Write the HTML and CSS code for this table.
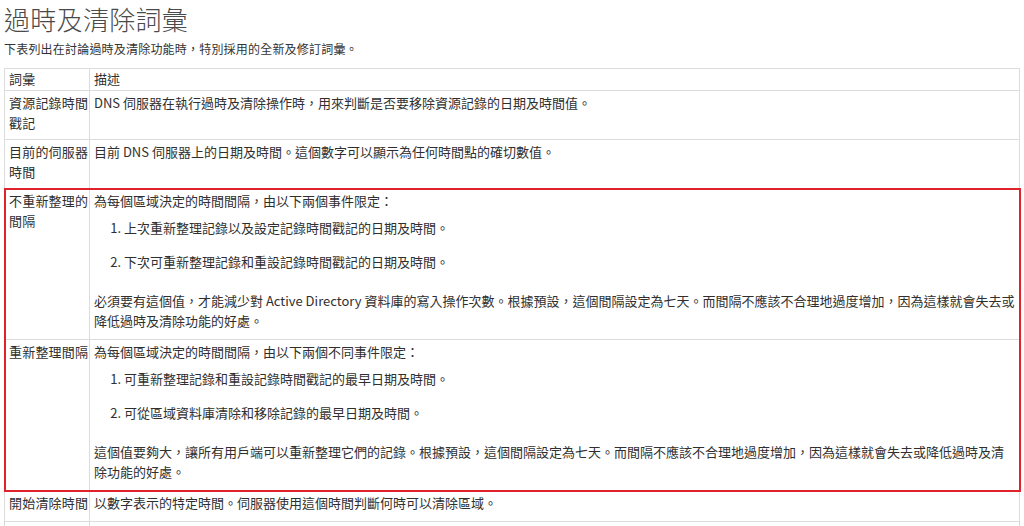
FILE: index.html
```html
<!DOCTYPE html>
<html lang="zh-Hant">
<head>
<meta charset="utf-8">
<title>過時及清除詞彙</title>
<link rel="stylesheet" href="styles.css">
</head>
<body>
<main class="page">
  <h1 class="title">過時及清除詞彙</h1>
  <p class="intro">下表列出在討論過時及清除功能時，特別採用的全新及修訂詞彙。</p>
  <table class="terms">
    <thead>
      <tr>
        <th class="term">詞彙</th>
        <th class="desc">描述</th>
      </tr>
    </thead>
    <tbody>
      <tr>
        <td class="term">資源記錄時間戳記</td>
        <td class="desc"><p>DNS 伺服器在執行過時及清除操作時，用來判斷是否要移除資源記錄的日期及時間值。</p></td>
      </tr>
      <tr>
        <td class="term">目前的伺服器時間</td>
        <td class="desc"><p>目前 DNS 伺服器上的日期及時間。這個數字可以顯示為任何時間點的確切數值。</p></td>
      </tr>
    </tbody>
    <tbody class="highlight">
      <tr>
        <td class="term">不重新整理的間隔</td>
        <td class="desc">
          <p>為每個區域決定的時間間隔，由以下兩個事件限定：</p>
          <ol class="steps">
            <li>上次重新整理記錄以及設定記錄時間戳記的日期及時間。</li>
            <li>下次可重新整理記錄和重設記錄時間戳記的日期及時間。</li>
          </ol>
          <p>必須要有這個值，才能減少對 Active Directory 資料庫的寫入操作次數。根據預設，這個間隔設定為七天。而間隔不應該不合理地過度增加，因為這樣就會失去或降低過時及清除功能的好處。</p>
        </td>
      </tr>
      <tr>
        <td class="term">重新整理間隔</td>
        <td class="desc">
          <p>為每個區域決定的時間間隔，由以下兩個不同事件限定：</p>
          <ol class="steps">
            <li>可重新整理記錄和重設記錄時間戳記的最早日期及時間。</li>
            <li>可從區域資料庫清除和移除記錄的最早日期及時間。</li>
          </ol>
          <p>這個值要夠大，讓所有用戶端可以重新整理它們的記錄。根據預設，這個間隔設定為七天。而間隔不應該不合理地過度增加，因為這樣就會失去或降低過時及清除功能的好處。</p>
        </td>
      </tr>
    </tbody>
    <tbody>
      <tr>
        <td class="term">開始清除時間</td>
        <td class="desc"><p>以數字表示的特定時間。伺服器使用這個時間判斷何時可以清除區域。</p></td>
      </tr>
      <tr>
        <td class="term">&nbsp;</td>
        <td class="desc"><p>&nbsp;</p></td>
      </tr>
    </tbody>
  </table>
</main>
</body>
</html>
```

FILE: styles.css
```css
html, body {
  margin: 0;
  padding: 0;
  background: #ffffff;
}

body {
  font-family: "Noto Sans CJK TC", "Noto Sans", sans-serif;
  color: #2f2f2f;
}

.page {
  padding: 0 4px;
}

.title {
  margin: 0;
  padding-top: 1px;
  font-size: 26px;
  line-height: 36px;
  font-weight: 300;
  color: #4a4a4a;
  letter-spacing: 0.3px;
}

.intro {
  margin: 0 0 9px;
  padding-top: 2px;
  font-size: 12px;
  line-height: 20px;
  letter-spacing: 0.2px;
  color: #333333;
}

.terms {
  width: 100%;
  border-collapse: collapse;
  font-size: 13px;
  line-height: 20px;
}

.terms th,
.terms td {
  border: 1px solid #dcdcdc;
  text-align: left;
  vertical-align: top;
  font-weight: normal;
}

.terms th {
  padding: 0 4px 1px;
}

.terms td {
  padding: 2px 4px 6px;
}

.terms .term {
  width: 80px;
  padding-right: 0;
  letter-spacing: 0.2px;
}

.terms p {
  margin: 0 0 2px;
}

.steps {
  margin: 7px 0 19px;
  padding-left: 30px;
}

.steps li {
  margin: 0 0 14px;
}

.highlight {
  outline: 2px solid #e0232b;
  outline-offset: -1px;
}
```
